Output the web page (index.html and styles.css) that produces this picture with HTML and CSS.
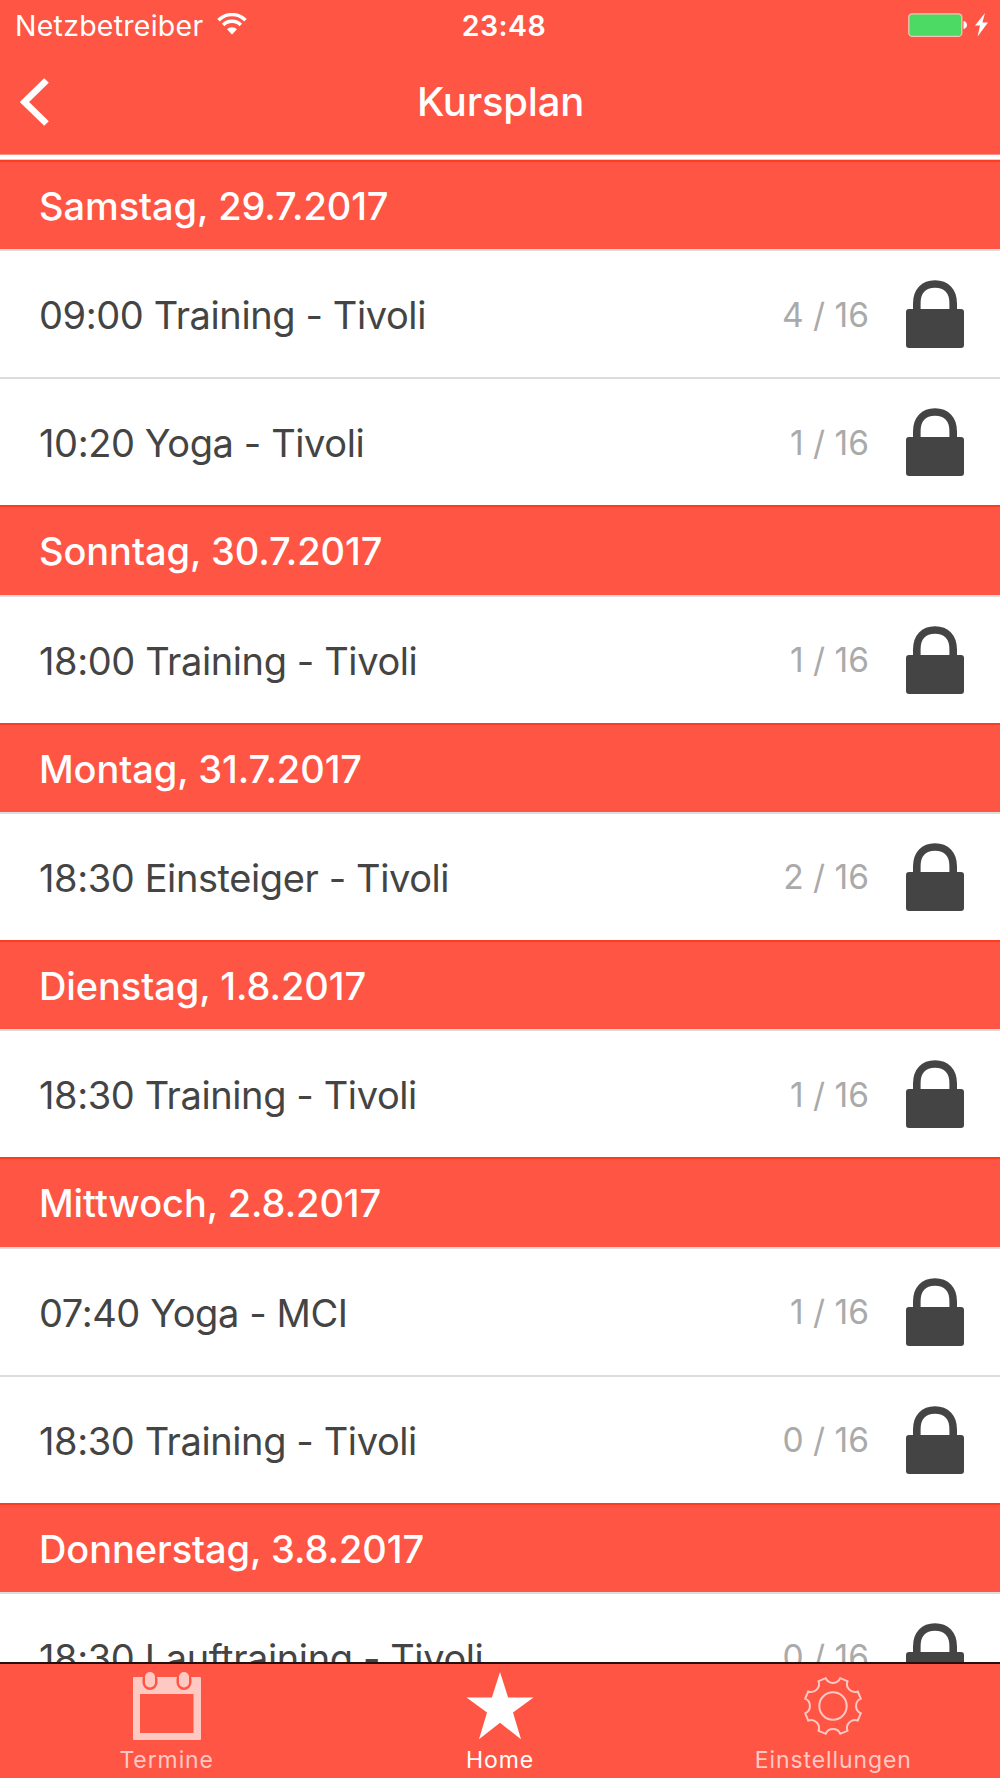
FILE: index.html
```
<!DOCTYPE html>
<html lang="de">
  <head>
    <meta charset="UTF-8" />
    <meta name="viewport" content="width=device-width, initial-scale=1.0" />
    <title>Kursplan</title>
    <link rel="stylesheet" href="styles.css">
  </head>

  <body>
    <!-- lock icon, reused in every row -->
    <svg class="defs" width="0" height="0">
      <symbol id="lock" viewBox="0 0 58 68">
        <path d="M10.800 31V23.500C10.800 11 18 4 29 4s18.200 7 18.200 19.500V31" fill="none" stroke="#444" stroke-width="7.6" />
        <rect y="29" width="58" height="39" rx="3" fill="#444" />
      </symbol>
    </svg>

    <header class="header">
      <div class="statusbar">
        <div class="carrier">
          <span>Netzbetreiber</span>
          <svg class="wifi" width="30" height="22" viewBox="0 0 30 22">
            <path d="M1.5 7.2a19 19 0 0 1 27 0M6.2 12a12.4 12.4 0 0 1 17.6 0" fill="none" stroke="#fff" stroke-width="3.5" />
            <path d="M15 21.5l-5-5.2a7 7 0 0 1 10 0z" fill="#fff" />
          </svg>
        </div>
        <span class="clock">23:48</span>
        <div class="power">
          <svg width="80" height="24" viewBox="0 0 80 24">
            <rect x="0.8" y="0.8" width="53" height="22.6" rx="3.5" fill="#4cd964" stroke="#ffc0b4" stroke-width="1.3" />
            <path d="M55.5 8c2.200.600 3.500 2 3.500 4s-1.300 3.400-3.500 4z" fill="#fff" />
            <path d="M77 0L67 12.500h5L69.600 23.500 80 9.500h-5.600z" fill="#fff" />
          </svg>
        </div>
      </div>
      <div class="navbar">
        <a class="back" href="#">
          <svg width="30" height="48" viewBox="0 0 30 48">
            <path d="M26.500 2.500L4.500 24l22 21.500" fill="none" stroke="#fff" stroke-width="6.600" />
          </svg>
        </a>
        <h1>Kursplan</h1>
      </div>
    </header>

    <main class="list">
      <h2>Samstag, 29.7.2017</h2>
      <div class="row">
        <span class="course">09:00 Training - Tivoli</span>
        <span class="count">4 / 16</span>
        <svg class="lock"><use href="#lock" /></svg>
      </div>
      <div class="row">
        <span class="course">10:20 Yoga - Tivoli</span>
        <span class="count">1 / 16</span>
        <svg class="lock"><use href="#lock" /></svg>
      </div>

      <h2>Sonntag, 30.7.2017</h2>
      <div class="row">
        <span class="course">18:00 Training - Tivoli</span>
        <span class="count">1 / 16</span>
        <svg class="lock"><use href="#lock" /></svg>
      </div>

      <h2>Montag, 31.7.2017</h2>
      <div class="row">
        <span class="course">18:30 Einsteiger - Tivoli</span>
        <span class="count">2 / 16</span>
        <svg class="lock"><use href="#lock" /></svg>
      </div>

      <h2>Dienstag, 1.8.2017</h2>
      <div class="row">
        <span class="course">18:30 Training - Tivoli</span>
        <span class="count">1 / 16</span>
        <svg class="lock"><use href="#lock" /></svg>
      </div>

      <h2>Mittwoch, 2.8.2017</h2>
      <div class="row">
        <span class="course">07:40 Yoga - MCI</span>
        <span class="count">1 / 16</span>
        <svg class="lock"><use href="#lock" /></svg>
      </div>
      <div class="row">
        <span class="course">18:30 Training - Tivoli</span>
        <span class="count">0 / 16</span>
        <svg class="lock"><use href="#lock" /></svg>
      </div>

      <h2>Donnerstag, 3.8.2017</h2>
      <div class="row">
        <span class="course">18:30 Lauftraining - Tivoli</span>
        <span class="count">0 / 16</span>
        <svg class="lock"><use href="#lock" /></svg>
      </div>
    </main>

    <nav class="tabbar">
      <a class="tab" href="#">
        <svg width="68" height="68" viewBox="0 0 68 68">
          <path d="M1 5H67a1 1 0 0 1 1 1V67a1 1 0 0 1-1 1H1a1 1 0 0 1-1-1V6a1 1 0 0 1 1-1zM7 22V61H60.500V22z" fill="currentColor" fill-rule="evenodd" />
          <rect x="11" y="1" width="12" height="15.500" rx="6" fill="#ff5544" stroke="#ff5544" stroke-width="3" />
          <rect x="45" y="1" width="12" height="15.500" rx="6" fill="#ff5544" stroke="#ff5544" stroke-width="3" />
          <rect x="12" y="0" width="10" height="15.500" rx="5" fill="currentColor" />
          <rect x="46" y="0" width="10" height="15.500" rx="5" fill="currentColor" />
        </svg>
        <span>Termine</span>
      </a>
      <a class="tab active" href="#">
        <svg width="68" height="68" viewBox="0 0 68 68">
          <path d="M34 0l8.100 25.500h25.400L47 40.600 55 67.300 34 50.800 13 67.300 21 40.600.500 25.500h25.400z" fill="currentColor" />
        </svg>
        <span>Home</span>
      </a>
      <a class="tab" href="#">
        <svg width="68" height="68" viewBox="-34 -34 68 68">
          <g fill="none" stroke="currentColor" stroke-width="2">
            <circle r="13.700" />
            <path d="M-7.300-27.800A8 8 0 0 0 7.300-27.800L14.500-24.800A8 8 0 0 0 24.800-14.500L27.800-7.300A8 8 0 0 0 27.800 7.300L24.800 14.500A8 8 0 0 0 14.500 24.800L7.300 27.800A8 8 0 0 0-7.300 27.800L-14.500 24.800A8 8 0 0 0-24.800 14.500L-27.800 7.300A8 8 0 0 0-27.800-7.300L-24.800-14.500A8 8 0 0 0-14.500-24.800z" />
          </g>
        </svg>
        <span>Einstellungen</span>
      </a>
    </nav>
  </body>
</html>
```
FILE: styles.css
```
* {
  margin: 0;
  padding: 0;
  box-sizing: border-box;
}

body {
  display: flex;
  flex-direction: column;
  height: 1778px;
  overflow: hidden;
  background-color: #fff;
  font-family: Inter, "Noto Sans", sans-serif;
  color: #fff;
}

a {
  color: inherit;
  text-decoration: none;
}

svg {
  display: block;
  flex-shrink: 0;
}

.defs {
  position: absolute;
}

.header {
  height: 155px;
  background-color: #ff5544;
  border-bottom: 1px solid #ff8f84;
}

.statusbar {
  display: grid;
  grid-template-columns: 1fr auto 1fr;
  align-items: center;
  height: 50px;
  padding: 0 12px 0 15px;
  font-size: 28.5px;
}

.carrier {
  display: flex;
  align-items: center;
  gap: 14px;
  font-weight: 370;
  letter-spacing: 0.25px;
}

.wifi {
  margin-top: -2px;
}

.clock {
  padding-left: 5px;
  font-weight: 600;
  letter-spacing: 0.5px;
}

.power {
  display: flex;
  justify-content: flex-end;
}

.navbar {
  display: grid;
  grid-template-columns: 1fr auto 1fr;
  align-items: center;
  height: 104px;
  padding: 0 19px 0 20px;
}

.back {
  justify-self: start;
}

h1 {
  padding-bottom: 2px;
  font-size: 40px;
  font-weight: 500;
  letter-spacing: -0.2px;
}

.list {
  flex: 1;
  min-height: 0;
  margin-top: 4px;
  border-top: 1px solid #e0d0ce;
  overflow: hidden;
}

h2 {
  height: 89.33px;
  padding-left: 39px;
  background-color: #ff5544;
  border-top: 2px solid #ff3b20;
  font-size: 38px;
  font-weight: 500;
  line-height: 88.6px;
  letter-spacing: -0.08px;
}

.row {
  display: flex;
  align-items: center;
  height: 128px;
  padding: 0 36px 0 39px;
  border-top: 2px solid #dcdcdc;
  background-color: #fff;
}

.course {
  flex: 1;
  padding-top: 2px;
  color: #444;
  font-size: 38px;
  font-weight: 370;
  letter-spacing: -0.4px;
}

.count {
  padding-top: 1px;
  color: #aaa;
  font-size: 33.5px;
  font-weight: 370;
}

.lock {
  width: 58px;
  height: 68px;
  margin-left: 37px;
}

.tabbar {
  display: flex;
  height: 116px;
  border-top: 2px solid #26100e;
  background-color: #ff5544;
}

.tab {
  flex: 1;
  display: flex;
  flex-direction: column;
  align-items: center;
  padding-top: 8px;
  color: #ffc9c3;
  font-size: 23px;
  line-height: 28px;
  letter-spacing: 0.9px;
}

.tab span {
  margin-top: 6px;
}

.tab.active {
  color: #fff;
}
```
